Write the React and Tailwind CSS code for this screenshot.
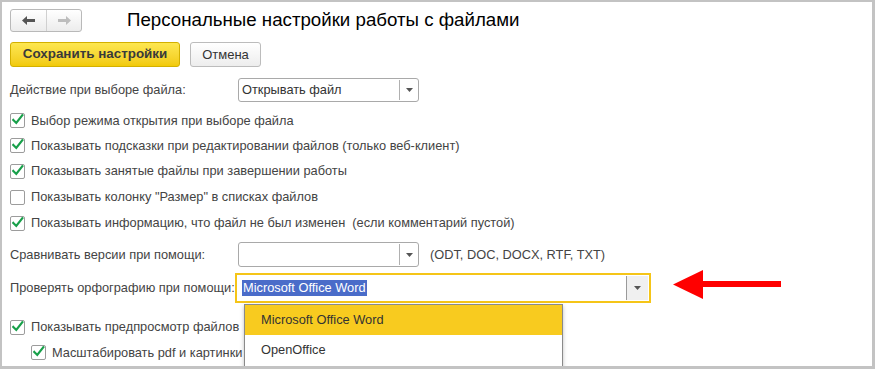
const FONT = { fontFamily: '"Liberation Sans", Arial, sans-serif' }

function Caret() {
  return (
    <svg width="7" height="4" viewBox="0 0 7 4">
      <path d="M0 0 L7 0 L3.5 4 Z" fill="#555" />
    </svg>
  )
}

function Select({ value, width, height = 24 }) {
  return (
    <div
      className="flex items-stretch border border-[#a9a9a9] rounded-[3px] bg-white shrink-0"
      style={{ width, height }}
    >
      <div className="flex-1 flex items-center pl-[3px] text-[12.8px] text-[#333]">{value}</div>
      <div className="w-[19px] flex items-center justify-center border-l border-[#b0b0b0] my-[1px]">
        <Caret />
      </div>
    </div>
  )
}

function Check({ checked }) {
  return (
    <div className="w-[15px] h-[15px] border border-[#9c9c9c] rounded-[2px] bg-white flex items-center justify-center shrink-0">
      {checked && (
        <svg width="14" height="13" viewBox="0 0 14 13" className="-mt-[2px] ml-[1px]">
          <path d="M1.5 7 L5 10.5 L12 1.5" stroke="#18a04a" strokeWidth="2.6" fill="none" strokeLinecap="square" />
        </svg>
      )}
    </div>
  )
}

function CheckRow({ checked, label, h = 25, indent = false }) {
  return (
    <div className={`flex items-center gap-[6px] ${indent ? 'pl-[21px]' : ''}`} style={{ height: h }}>
      <Check checked={checked} />
      <span className="text-[12.8px] text-[#444] whitespace-pre">{label}</span>
    </div>
  )
}

export default function App() {
  return (
    <div
      className="w-[875px] h-[369px] bg-white border-t-2 border-l-2 border-r-[3px] border-b-[3px] border-[#c3c3c3] overflow-hidden relative"
      style={FONT}
    >
      <div className="pl-[8px] flex flex-col">
        {/* Header */}
        <div className="mt-[7px] h-[23px] flex items-center">
          <div className="flex h-[23px] w-[72px] border border-[#b9b9b9] rounded-[3px] bg-gradient-to-b from-white to-[#ececec]">
            <div className="w-[36px] flex items-center justify-center border-r border-[#d0d0d0]">
              <svg width="13" height="9" viewBox="0 0 13 9">
                <path d="M0 4.5 L5 0 L5 3 L13 3 L13 6 L5 6 L5 9 Z" fill="#555" />
              </svg>
            </div>
            <div className="flex-1 flex items-center justify-center">
              <svg width="13" height="9" viewBox="0 0 13 9">
                <path d="M13 4.5 L8 0 L8 3 L0 3 L0 6 L8 6 L8 9 Z" fill="#bdbdbd" />
              </svg>
            </div>
          </div>
          <h1 className="ml-[45px] text-[18.7px] text-black leading-none whitespace-nowrap">Персональные настройки работы с файлами</h1>
        </div>

        {/* Buttons */}
        <div className="mt-[10px] h-[25px] flex gap-[10px]">
          <button className="w-[170px] h-[25px] rounded-[3px] border border-[#d3b000] bg-gradient-to-b from-[#fde74f] to-[#f2ca05] text-[13.4px] font-bold text-[#3a3a3a]">
            Сохранить настройки
          </button>
          <button className="w-[71px] h-[25px] rounded-[3px] border border-[#bcbcbc] bg-gradient-to-b from-white to-[#ededed] text-[13px] text-[#333]">
            Отмена
          </button>
        </div>

        {/* Action on select */}
        <div className="mt-[11px] h-[24px] flex items-center">
          <span className="w-[228px] shrink-0 whitespace-nowrap text-[12.8px] text-[#444]">Действие при выборе файла:</span>
          <Select value="Открывать файл" width={181} />
        </div>

        <div className="mt-[6px]">
          <CheckRow checked label="Выбор режима открытия при выборе файла" />
          <CheckRow checked label="Показывать подсказки при редактировании файлов (только веб-клиент)" />
          <CheckRow checked h={26} label="Показывать занятые файлы при завершении работы" />
          <CheckRow checked={false} h={26} label='Показывать колонку "Размер" в списках файлов' />
          <CheckRow checked h={26} label="Показывать информацию, что файл не был изменен  (если комментарий пустой)" />
        </div>

        {/* Compare */}
        <div className="mt-[6px] h-[25px] flex items-center">
          <span className="w-[228px] shrink-0 whitespace-nowrap text-[12.8px] text-[#444]">Сравнивать версии при помощи:</span>
          <Select value="" width={181} height={25} />
          <span className="ml-[11px] text-[12.8px] text-[#444] whitespace-nowrap">(ODT, DOC, DOCX, RTF, TXT)</span>
        </div>

        {/* Spelling */}
        <div className="mt-[6px] h-[30px] flex items-center">
          <span className="w-[225px] shrink-0 whitespace-nowrap text-[12.8px] text-[#444]">Проверять орфографию при помощи:</span>
          <div className="relative w-[416px] h-[30px] shrink-0 border-2 border-[#f5c518] bg-white flex items-stretch">
            <div className="flex-1 flex items-center pl-[5px]">
              <span className="bg-[#4a6cc9] text-white text-[12.8px] leading-[16px] px-[1px]">Microsoft Office Word</span>
            </div>
            <div className="w-[22px] my-[1px] mr-[1px] flex items-center justify-center bg-[#f0f0f0] border-l border-[#9a9a9a]">
              <Caret />
            </div>

            {/* Dropdown list */}
            <div className="absolute left-[7px] top-[29px] w-[319px] h-[63px] bg-white border border-[#8a8a8a] shadow-[0_2px_4px_rgba(0,0,0,0.25)] flex flex-col z-10">
              <div className="h-[30px] bg-[#f8cb1f] flex items-center pl-[16px] text-[12.8px] text-[#333]">Microsoft Office Word</div>
              <div className="h-[30px] flex items-center pl-[16px] text-[12.8px] text-[#333]">OpenOffice</div>
            </div>
          </div>
        </div>

        <div className="mt-[11px]">
          <CheckRow checked h={26} label="Показывать предпросмотр файлов" />
          <CheckRow checked indent label="Масштабировать pdf и картинки" />
        </div>
      </div>

      {/* Red annotation arrow */}
      <svg className="absolute left-[671px] top-[268px]" width="110" height="30" viewBox="0 0 110 30">
        <path d="M0 14.5 L30 0 L30 29 Z" fill="#ff0000" />
        <rect x="29" y="11" width="79" height="6" fill="#ff0000" />
      </svg>
    </div>
  )
}
